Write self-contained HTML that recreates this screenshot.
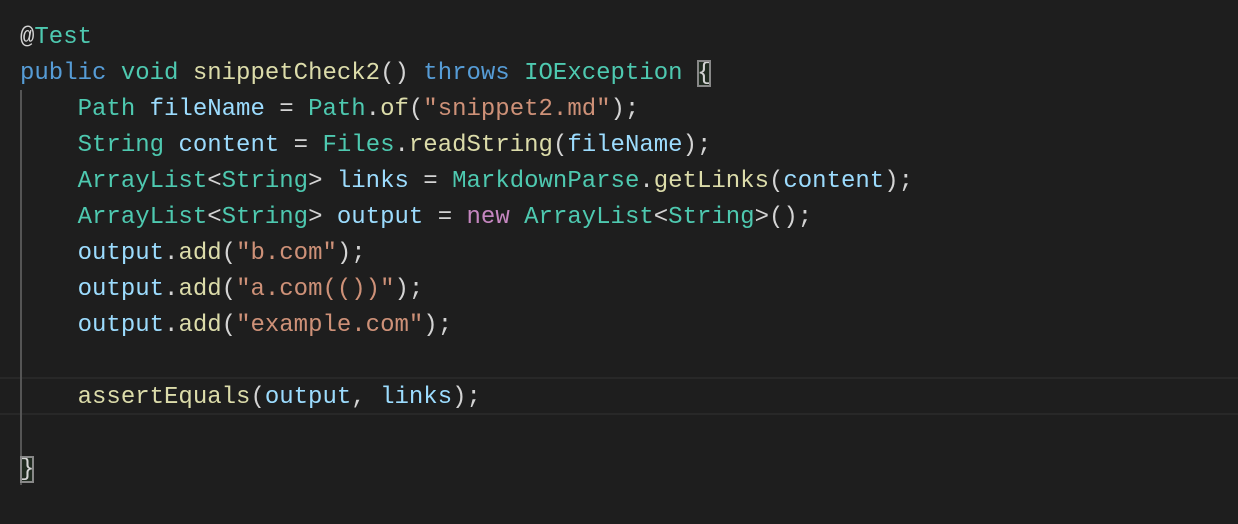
<!DOCTYPE html>
<html><head><style>
body{margin:0;background:#1e1e1e;width:1238px;height:524px;overflow:hidden;position:relative}
pre{margin:0;position:absolute;left:20px;top:20px;font-family:"Liberation Mono",monospace;font-size:24px;line-height:36px;color:#d4d4d4}
.k{color:#569cd6}.t{color:#4ec9b0}.f{color:#dcdcaa}.v{color:#9cdcfe}.s{color:#ce9178}.n{color:#c586c0}
.b{outline:2px solid #888;outline-offset:-2px;background:#1f2a1f}
.g{position:absolute;left:20px;top:90px;width:2px;height:395px;background:#555}
.cl{position:absolute;left:0;right:0;top:377px;height:34px;border-top:2px solid #282828;border-bottom:2px solid #282828}
</style></head><body>
<div class="cl"></div><div class="g"></div>
<pre>@<span class="t">Test</span>
<span class="k">public</span> <span class="t">void</span> <span class="f">snippetCheck2</span>() <span class="k">throws</span> <span class="t">IOException</span> <span class="b">{</span>
    <span class="t">Path</span> <span class="v">fileName</span> = <span class="t">Path</span>.<span class="f">of</span>(<span class="s">"snippet2.md"</span>);
    <span class="t">String</span> <span class="v">content</span> = <span class="t">Files</span>.<span class="f">readString</span>(<span class="v">fileName</span>);
    <span class="t">ArrayList</span>&lt;<span class="t">String</span>&gt; <span class="v">links</span> = <span class="t">MarkdownParse</span>.<span class="f">getLinks</span>(<span class="v">content</span>);
    <span class="t">ArrayList</span>&lt;<span class="t">String</span>&gt; <span class="v">output</span> = <span class="n">new</span> <span class="t">ArrayList</span>&lt;<span class="t">String</span>&gt;();
    <span class="v">output</span>.<span class="f">add</span>(<span class="s">"b.com"</span>);
    <span class="v">output</span>.<span class="f">add</span>(<span class="s">"a.com(())"</span>);
    <span class="v">output</span>.<span class="f">add</span>(<span class="s">"example.com"</span>);

    <span class="f">assertEquals</span>(<span class="v">output</span>, <span class="v">links</span>);

<span class="b">}</span></pre>
</body></html>
